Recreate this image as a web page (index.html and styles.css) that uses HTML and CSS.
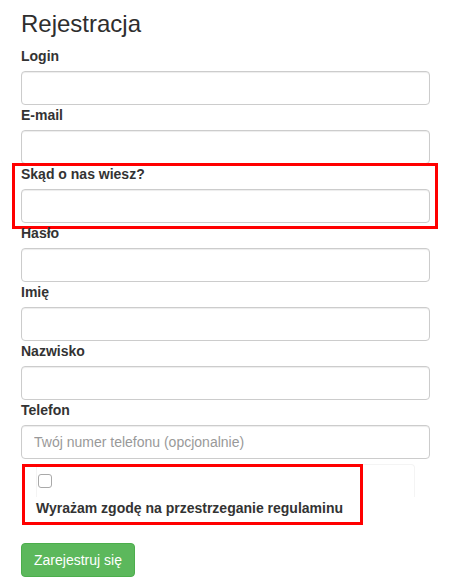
FILE: index.html
```html
<!DOCTYPE html>
<html lang="pl">
<head>
  <meta charset="UTF-8">
  <meta name="viewport" content="width=device-width, initial-scale=1.0">
  <title>Rejestracja</title>
  <link rel="stylesheet" href="styles.css">
</head>
<body>
  <div class="register">
    <h3 class="title">Rejestracja</h3>

    <form>
      <div class="form-group">
        <label for="login">Login</label>
        <input type="text" id="login" class="form-control">
      </div>

      <div class="form-group">
        <label for="email">E-mail</label>
        <input type="email" id="email" class="form-control">
      </div>

      <div class="form-group marked">
        <label for="source">Skąd o nas wiesz?</label>
        <input type="text" id="source" class="form-control">
      </div>

      <div class="form-group">
        <label for="password">Hasło</label>
        <input type="password" id="password" class="form-control">
      </div>

      <div class="form-group">
        <label for="name">Imię</label>
        <input type="text" id="name" class="form-control">
      </div>

      <div class="form-group">
        <label for="surname">Nazwisko</label>
        <input type="text" id="surname" class="form-control">
      </div>

      <div class="form-group">
        <label for="phone">Telefon</label>
        <input type="tel" id="phone" class="form-control" placeholder="Twój numer telefonu (opcjonalnie)">
      </div>

      <div class="terms">
        <div class="check-wrap">
          <input type="checkbox" id="terms" class="check">
        </div>
        <label for="terms" class="terms-label">Wyrażam zgodę na przestrzeganie regulaminu</label>
      </div>

      <button type="submit" class="btn-success">Zarejestruj się</button>
    </form>
  </div>
</body>
</html>
```

FILE: styles.css
```css
body {
  margin: 0;
  font-family: "Liberation Sans", Arial, Helvetica, sans-serif;
  font-size: 14px;
  line-height: 20px;
  color: #333;
  background-color: #fff;
}

.register {
  width: 409px;
  padding-left: 21px;
}

.title {
  font-size: 24px;
  font-weight: 500;
  line-height: 26px;
  margin: 11px 0 9px;
  color: #2e2e2e;
}

form {
  margin: 0;
}

.form-group {
  position: relative;
}

.form-group label {
  display: block;
  font-weight: bold;
  margin-bottom: 5px;
}

.form-control {
  display: block;
  box-sizing: border-box;
  width: 100%;
  height: 34px;
  margin: 0;
  padding: 6px 12px;
  font-family: inherit;
  font-size: 14px;
  color: #555;
  background-color: #fff;
  border: 1px solid #ccc;
  border-radius: 4px;
  box-shadow: inset 0 1px 1px rgba(0, 0, 0, 0.075);
}

.form-control::placeholder {
  color: #999;
}

.marked::after {
  content: "";
  position: absolute;
  top: -1px;
  bottom: -6px;
  left: -9px;
  right: -8px;
  border: 3px solid #f00;
  pointer-events: none;
}

.terms {
  position: relative;
  margin-top: 5px;
}

.terms::after {
  content: "";
  position: absolute;
  top: 0;
  left: 1px;
  width: 341px;
  height: 61px;
  box-sizing: border-box;
  border: 3px solid #f00;
  pointer-events: none;
}

.check-wrap {
  box-sizing: border-box;
  width: 379px;
  height: 33px;
  margin-left: 15px;
  padding: 9px 0 0 1px;
  border: 1px solid #f4f4f4;
  border-bottom: none;
  border-radius: 4px 4px 0 0;
}

.check {
  appearance: none;
  display: block;
  box-sizing: border-box;
  width: 14px;
  height: 14px;
  margin: 0;
  border: 1px solid #a9a9a9;
  border-radius: 3px;
  background-color: #fff;
}

.terms-label {
  display: block;
  margin: 1px 0 0 15px;
  font-weight: bold;
}

.btn-success {
  display: inline-block;
  margin-top: 25px;
  padding: 6px 12px;
  font-family: inherit;
  font-size: 14px;
  line-height: 20px;
  color: #fff;
  background-color: #5cb85c;
  border: 1px solid #4cae4c;
  border-radius: 4px;
  cursor: pointer;
}
```
